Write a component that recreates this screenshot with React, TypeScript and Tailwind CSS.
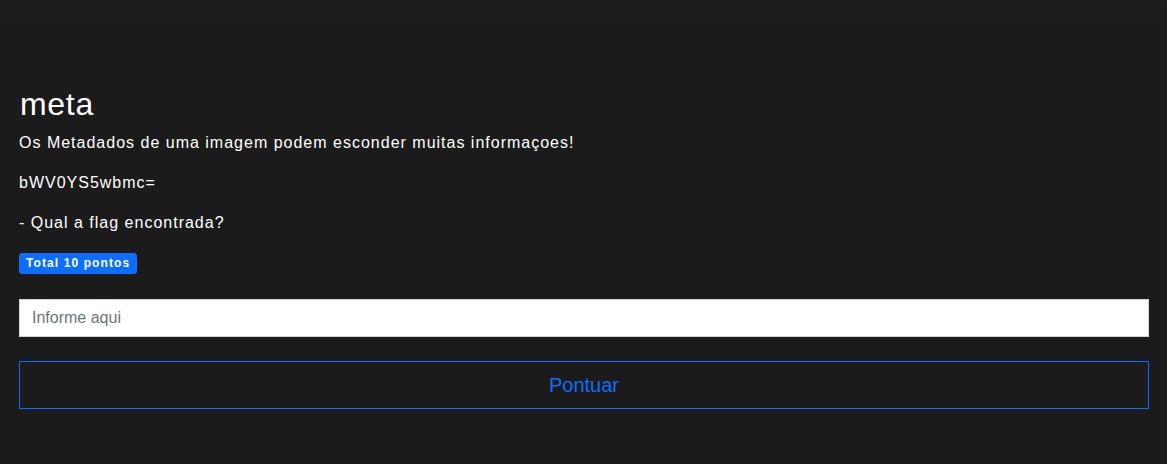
import React from 'react';

export default function App() {
  return (
    <div
      className="min-h-[464px] w-full bg-[#1b1b1b] text-white"
      style={{ fontFamily: '"Liberation Sans", Arial, sans-serif' }}
    >
      <div className="h-[30px] bg-gradient-to-b from-[#1d1d1d] to-[#1b1b1b]" />
      <div className="pl-[19px] pr-[18px] pt-[55px]">
        <h1 className="mb-2 pl-px text-[32px] leading-[1.2] font-normal tracking-[0.7px]">meta</h1>
        <p className="mb-4 text-base leading-6 tracking-[1px]">
          Os Metadados de uma imagem podem esconder muitas informaçoes!
        </p>
        <p className="mb-4 text-base leading-6 tracking-[1px]">bWV0YS5wbmc=</p>
        <p className="mb-[15px] text-base leading-6 tracking-[1px]">- Qual a flag encontrada?</p>
        <span className="inline-block rounded-[3px] bg-[#0d6efd] px-[7px] py-[4px] text-[12px] leading-[13px] font-bold tracking-[1.1px] text-white">
          Total 10 pontos
        </span>
        <input
          type="text"
          placeholder="Informe aqui"
          className="mt-[25px] block h-[38px] w-full border border-[#ced4da] bg-white px-[12px] text-base text-[#212529] placeholder:text-[#6c757d] outline-none"
        />
        <button className="mt-[24px] block h-[48px] w-full border border-[#0d6efd] bg-transparent text-[20px] text-[#0d6efd]">
          Pontuar
        </button>
      </div>
    </div>
  );
}
